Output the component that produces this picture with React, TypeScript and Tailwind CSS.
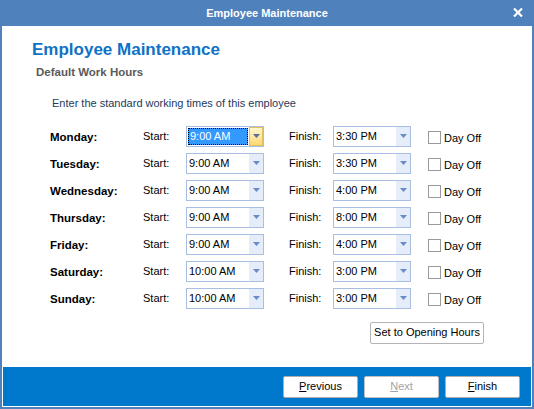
import React from 'react';

const days = [
  { day: 'Monday', start: '9:00 AM', finish: '3:30 PM', focused: true },
  { day: 'Tuesday', start: '9:00 AM', finish: '3:30 PM' },
  { day: 'Wednesday', start: '9:00 AM', finish: '4:00 PM' },
  { day: 'Thursday', start: '9:00 AM', finish: '8:00 PM' },
  { day: 'Friday', start: '9:00 AM', finish: '4:00 PM' },
  { day: 'Saturday', start: '10:00 AM', finish: '3:00 PM' },
  { day: 'Sunday', start: '10:00 AM', finish: '3:00 PM' },
];

function Arrow({ color }: { color: string }) {
  return (
    <svg width="7" height="4" viewBox="0 0 7 4">
      <path d="M0 0 H7 L3.5 4 Z" fill={color} />
    </svg>
  );
}

function Combo({ value, focused }: { value: string; focused?: boolean }) {
  return (
    <div className="w-[78px] h-[21px] border border-[#a9bfe2] bg-white flex">
      {focused ? (
        <div className="flex-1 p-px flex">
          <div className="flex-1 bg-[#3399ff] border border-dotted border-black text-white flex items-center pl-px">
            {value}
          </div>
        </div>
      ) : (
        <div className="flex-1 flex items-center pl-[2px] text-black">{value}</div>
      )}
      {focused ? (
        <div className="w-[14px] border border-[#e3c15f] bg-gradient-to-b from-[#fff5cf] to-[#ffd772] flex items-center justify-center">
          <Arrow color="#5a6f95" />
        </div>
      ) : (
        <div className="w-[14px] bg-[#e4edf9] flex items-center justify-center">
          <Arrow color="#6a8cc6" />
        </div>
      )}
    </div>
  );
}

export default function App() {
  return (
    <div className="w-[534px] h-[409px] bg-[#4f81bd] px-[2px] pb-[2px] flex flex-col font-['Liberation_Sans',Arial,sans-serif] text-[11px] leading-none">
      {/* Title bar */}
      <div className="h-[26px] shrink-0 relative flex items-center justify-center text-white font-bold text-[11px]">
        Employee Maintenance
        <svg className="absolute right-[9px] top-[8px]" width="10" height="9" viewBox="0 0 10 9">
          <path d="M1 0.5 L9 8.5 M9 0.5 L1 8.5" stroke="white" strokeWidth="2.2" />
        </svg>
      </div>

      <div className="flex-1 bg-white flex flex-col">
        <div className="flex-1 flex flex-col">
          <h1 className="ml-[30px] mt-[15px] text-[17px] font-bold text-[#0f72c6] leading-none">
            Employee Maintenance
          </h1>
          <h2 className="ml-[34px] mt-[9px] text-[11.5px] font-bold text-[#5a5a5a] leading-none">
            Default Work Hours
          </h2>
          <p className="ml-[50px] mt-[19px] text-[#1e395b]">
            Enter the standard working times of this employee
          </p>

          <div className="ml-[48px] mt-[17px] w-[434px] flex flex-col gap-[6px]">
            {days.map((d) => (
              <div key={d.day} className="h-[21px] flex items-center text-black">
                <div className="w-[93px] mt-[3px] font-bold text-[11.5px]">{d.day}:</div>
                <div className="w-[43px] mt-px">Start:</div>
                <Combo value={d.start} focused={d.focused} />
                <div className="w-[44px] ml-[25px] mt-px">Finish:</div>
                <Combo value={d.finish} />
                <div className="ml-[17px] mt-[3px] w-[13px] h-[13px] border border-[#9a9a9a] bg-white" />
                <div className="ml-[3px] mt-[5px]">Day Off</div>
              </div>
            ))}
            <button className="self-end mt-[7px] w-[114px] h-[22px] border border-[#b4b4b4] rounded-[2px] bg-white text-black flex items-center justify-center">
              Set to Opening Hours
            </button>
          </div>
        </div>

        {/* Footer bar */}
        <div className="h-[39px] mx-px mb-px bg-[#0079cd] flex items-center justify-end gap-[6px] pr-[11px]">
          <button className="w-[75px] h-[22px] bg-white border border-[#adadad] rounded-[2px] text-black flex items-center justify-center">
            <span><span className="underline">P</span>revious</span>
          </button>
          <button className="w-[75px] h-[22px] bg-white border border-[#bfbfbf] rounded-[2px] text-[#a3a3a3] flex items-center justify-center">
            <span><span className="underline">N</span>ext</span>
          </button>
          <button className="w-[75px] h-[22px] bg-white border border-[#adadad] rounded-[2px] text-black flex items-center justify-center">
            <span><span className="underline">F</span>inish</span>
          </button>
        </div>
      </div>
    </div>
  );
}
